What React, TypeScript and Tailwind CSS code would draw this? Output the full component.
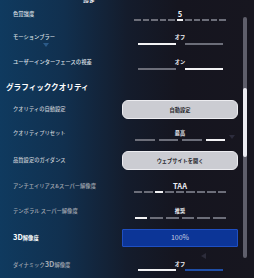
const jp = { fontFamily: '"Noto Sans CJK JP", "Noto Sans", sans-serif' };

function Segments({ count, active, width = 92, gap = 2, activeColor = 'bg-[#f2f2f4]' }: { count: number; active: number; width?: number; gap?: number; activeColor?: string }) {
  const segs = [];
  for (let i = 0; i < count; i++) {
    segs.push(<div key={i} className={`flex-1 h-[2px] ${i === active ? activeColor : 'bg-[#6c6e79]'}`} />);
  }
  return (
    <div className="flex" style={{ width, gap }}>
      {segs}
    </div>
  );
}

function Toggle({ on, blue }: { on: boolean; blue?: boolean }) {
  return (
    <div className="flex gap-[9px]">
      <div className={`w-[38px] h-[2px] ${on ? 'bg-[#6c6e79]' : 'bg-[#f2f2f4]'}`} />
      <div className={`w-[38px] h-[2px] ${on ? 'bg-[#f2f2f4]' : blue ? 'bg-[#1f4ea6]' : 'bg-[#6c6e79]'}`} />
    </div>
  );
}

function Value({ text, big, children }: { text: string; big?: boolean; children: React.ReactNode }) {
  return (
    <div className="w-[116px] flex flex-col items-center pt-[3px]">
      <div className={`h-[6px] flex items-center font-bold text-[#eceef2] leading-none ${big ? 'text-[7.5px]' : 'text-[5.2px]'}`}>{text}</div>
      <div className="mt-[3px]">{children}</div>
    </div>
  );
}

function Row({ h, label, dim, children }: { h: number; label: React.ReactNode; dim?: string; children: React.ReactNode }) {
  return (
    <div className="flex items-center" style={{ height: h }}>
      <div className={`flex-1 text-[5.3px] font-medium leading-none ${dim ?? 'text-[#dde0e6]'}`}>{label}</div>
      {children}
    </div>
  );
}

function Button({ text }: { text: string }) {
  return (
    <div className="w-[116px] h-[19px] rounded-[6px] bg-[#cbccd2] border border-[#ececf0] flex items-center justify-center text-[5.2px] font-bold text-[#26262c] leading-none">
      {text}
    </div>
  );
}

export default function App() {
  return (
    <div
      className="relative w-[254px] h-[278px] overflow-hidden flex"
      style={{ ...jp, background: 'linear-gradient(90deg, #0f3a5f 0%, #11304f 25%, #141c2c 50%, #15151f 70%, #17161f 100%)' }}
    >
      <div className="flex-1 pl-[13px] flex flex-col">
        <div className="h-[3px] overflow-hidden flex items-end pl-[70px]">
          <div className="text-[6px] leading-none font-bold text-[#e8e8ee] -mb-[1px]">設定</div>
        </div>
        <Row h={23} label="色覚強度">
          <Value text="5" big>
            <Segments count={11} active={5} />
          </Value>
        </Row>
        <Row h={25} label="モーションブラー">
          <Value text="オフ">
            <Toggle on={false} />
          </Value>
        </Row>
        <Row h={25} label="ユーザーインターフェースの視差">
          <Value text="オン">
            <Toggle on />
          </Value>
        </Row>
        <div className="h-[24px] flex items-center -ml-[7px] text-[7.6px] font-bold text-white leading-none">
          グラフィッククオリティ
        </div>
        <Row h={23} label="クオリティの自動設定" dim="text-[#c6cad2]">
          <Button text="自動設定" />
        </Row>
        <Row h={26} label="クオリティプリセット" dim="text-[#c6cad2]">
          <Value text="最高">
            <Segments count={4} active={3} width={90} gap={4} />
          </Value>
        </Row>
        <Row h={27} label="品質設定のガイダンス" dim="text-[#c6cad2]">
          <Button text="ウェブサイトを開く" />
        </Row>
        <Row h={26} label="アンチエイリアス&スーパー解像度" dim="text-[#a2a8b2]">
          <Value text="TAA" big>
            <Segments count={9} active={2} width={92} gap={2} />
          </Value>
        </Row>
        <Row h={26} label="テンポラル スーパー解像度" dim="text-[#a2a8b2]">
          <Value text="推奨">
            <Segments count={6} active={0} width={91} gap={3} />
          </Value>
        </Row>
        <Row
          h={26}
          label={
            <span className="font-bold text-white">
              <span className="text-[7.5px]">3D</span>解像度
            </span>
          }
        >
          <div className="w-[116px] h-[18px] bg-[#0c3597] border border-[#1f4fc2] rounded-[1px] flex items-center justify-center text-[7px] text-[#c9d1e2] leading-none">
            100%
          </div>
        </Row>
        <Row
          h={28}
          label={
            <span>
              ダイナミック<span className="text-[7.5px] font-bold">3D</span>解像度
            </span>
          }
          dim="text-[#a2a8b2]"
        >
          <Value text="オフ">
            <Toggle on={false} blue />
          </Value>
        </Row>
      </div>
      <div className="w-[4px] ml-[5px] mr-[7px] pt-[17px]">
        <div className="h-[241px] rounded-full bg-[#5f5f6b] flex flex-col">
          <div className="h-[71px]" />
          <div className="h-[69px] rounded-full bg-[#ececf2]" />
        </div>
      </div>
      <div className="absolute left-[43px] top-[43px] w-0 h-0 border-l-[3px] border-r-[3px] border-t-[4px] border-l-transparent border-r-transparent border-t-[#2b5a88]" />
      <div className="absolute left-[229px] top-[135px] w-0 h-0 border-l-[3px] border-r-[3px] border-t-[4px] border-l-transparent border-r-transparent border-t-[#2c2c3c]" />
      <div className="absolute left-[201px] top-[253px] w-0 h-0 border-t-[3px] border-b-[3px] border-r-[5px] border-t-transparent border-b-transparent border-r-[#2c2c3a]" />
    </div>
  );
}
